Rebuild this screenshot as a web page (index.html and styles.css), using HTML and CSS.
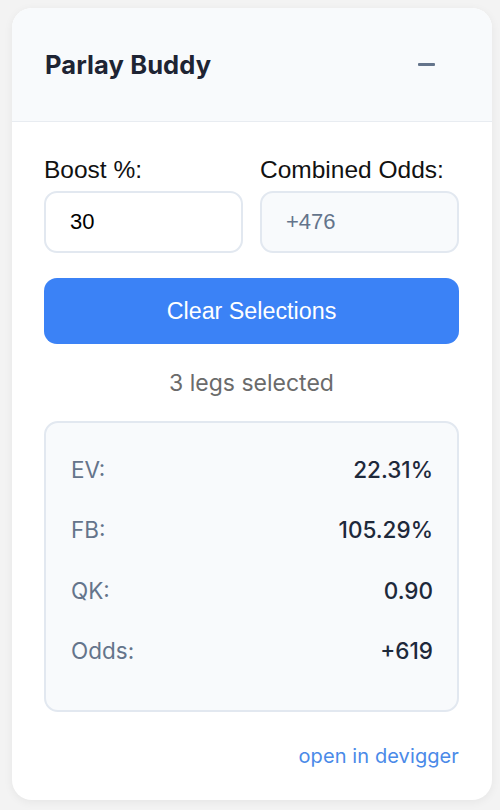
FILE: index.html
```html
<!DOCTYPE html>
<html>
<head>
<meta charset="utf-8">
<link rel="stylesheet" href="styles.css">
</head>
<body>
<div class="card">
  <div class="header">
    <h1 class="title">Parlay Buddy</h1>
    <button class="collapse" aria-label="collapse"><span class="minus"></span></button>
  </div>
  <div class="body">
    <div class="fields">
      <div class="field">
        <label class="label">Boost %:</label>
        <div class="input">30</div>
      </div>
      <div class="field">
        <label class="label">Combined Odds:</label>
        <div class="input readonly">+476</div>
      </div>
    </div>
    <button class="clear">Clear Selections</button>
    <div class="count">3 legs selected</div>
    <div class="stats">
      <div class="row"><span class="k">EV:</span><span class="v">22.31%</span></div>
      <div class="row"><span class="k">FB:</span><span class="v">105.29%</span></div>
      <div class="row"><span class="k">QK:</span><span class="v">0.90</span></div>
      <div class="row"><span class="k">Odds:</span><span class="v">+619</span></div>
    </div>
    <div class="footer"><a class="link" href="#">open in devigger</a></div>
  </div>
</div>
</body>
</html>
```

FILE: styles.css
```css
* { box-sizing: border-box; }
html, body { margin: 0; padding: 0; }
body {
  background: #f3f3f3;
  width: 500px;
  height: 810px;
  padding: 8px 8px 0 12px;
  font-family: Inter, "Noto Sans", sans-serif;
}
.card {
  width: 480px;
  height: 792px;
  background: #ffffff;
  border-radius: 20px;
  box-shadow: 0 2px 10px rgba(0,0,0,0.06);
  overflow: hidden;
}
.header {
  height: 114px;
  background: #f8fafc;
  border-bottom: 1px solid #e8ecf1;
  display: flex;
  align-items: center;
  justify-content: space-between;
  padding: 0 57px 0 33px;
}
.title {
  margin: 0;
  font-size: 25.5px;
  font-weight: 700;
  color: #1e2433;
  letter-spacing: 0.1px;
}
.collapse {
  border: 0;
  background: transparent;
  padding: 0;
  width: 17px;
  height: 20px;
  display: flex;
  align-items: center;
}
.minus {
  display: block;
  width: 17px;
  height: 3px;
  background: #64748b;
  border-radius: 1px;
}
.body {
  padding: 34px 33px 0 32px;
  display: flex;
  flex-direction: column;
}
.fields {
  display: grid;
  grid-template-columns: 1fr 1fr;
  gap: 17px;
}
.field { display: flex; flex-direction: column; }
.label {
  font-family: "Liberation Sans", Arial, sans-serif;
  font-size: 24.5px;
  color: #111;
  line-height: 28px;
  margin-bottom: 7px;
}
.input {
  height: 62px;
  border: 2px solid #e2e8f0;
  border-radius: 13px;
  display: flex;
  align-items: center;
  padding-left: 24px;
  font-family: "Liberation Sans", Arial, sans-serif;
  font-size: 22px;
  color: #000;
  background: #fff;
}
.input.readonly {
  background: #f8fafc;
  color: #64748b;
}
.clear {
  margin-top: 25px;
  height: 66px;
  border: 0;
  border-radius: 13px;
  background: #3b82f6;
  color: #fff;
  font-family: "Liberation Sans", Arial, sans-serif;
  font-size: 23.3px;
  padding: 0;
}
.count {
  margin-top: 25px;
  text-align: center;
  font-size: 23px;
  color: #6b6b6b;
  line-height: 28px;
}
.stats {
  margin-top: 24px;
  border: 2px solid #e2e8f0;
  border-radius: 14px;
  background: #f8fafc;
  padding: 16px 24px 30px 25px;
  height: 291px;
}
.row {
  height: 60.5px;
  display: flex;
  justify-content: space-between;
  align-items: center;
  font-size: 22.5px;
}
.k { color: #64748b; }
.v { color: #1e293b; font-weight: 500; }
.footer {
  margin-top: 30px;
  text-align: right;
  line-height: 28px;
}
.link {
  color: #4a8ae8;
  text-decoration: none;
  font-size: 20px;
  letter-spacing: 0.1px;
}
```
